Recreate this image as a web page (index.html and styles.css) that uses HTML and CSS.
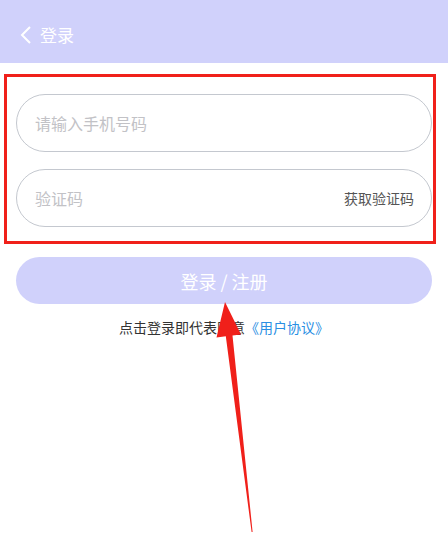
FILE: index.html
```html
<!DOCTYPE html>
<html lang="zh">
<head>
<meta charset="utf-8">
<title>登录</title>
<link rel="stylesheet" href="styles.css">
</head>
<body>
<header class="topbar">
  <svg class="back" width="14" height="20" viewBox="0 0 14 20"><path d="M11 2 L3 10 L11 18" fill="none" stroke="#fff" stroke-width="2"/></svg>
  <span class="title">登录</span>
</header>
<main class="content">
  <div class="field"><span class="ph">请输入手机号码</span></div>
  <div class="field"><span class="ph">验证码</span><span class="code">获取验证码</span></div>
  <div class="btn">登录 / 注册</div>
  <p class="agree">点击登录即代表同意<span class="link">《用户协议》</span></p>
</main>
<div class="mark"></div>
<svg class="arrow" width="448" height="540" viewBox="0 0 448 540">
  <polygon fill="#f0201a" points="225,302 241,334.6 232.5,335.5 252.6,532 251.6,532 225.8,336.3 216.5,337.4"/>
</svg>
</body>
</html>
```
FILE: styles.css
```css
html, body {
  margin: 0;
  padding: 0;
  background: #fff;
  font-family: "Noto Sans CJK SC", "Noto Sans", sans-serif;
}
body {
  width: 448px;
  height: 540px;
  position: relative;
  overflow: hidden;
}
.topbar {
  height: 63px;
  background: #d0d1fb;
  display: flex;
  align-items: center;
  padding-left: 19px;
  box-sizing: border-box;
  padding-top: 6px;
}
.back {
  display: block;
}
.title {
  color: #fff;
  font-size: 17px;
  margin-left: 7px;
  line-height: 20px;
}
.content {
  padding: 31px 16px 0;
  display: flex;
  flex-direction: column;
}
.field {
  height: 58px;
  border: 1px solid #c4c8cf;
  border-radius: 29px;
  box-sizing: border-box;
  display: flex;
  align-items: center;
  justify-content: space-between;
  padding: 0 17px 0 18px;
  margin-bottom: 17px;
}
.ph {
  color: #c2c2c6;
  font-size: 16px;
}
.code {
  color: #555;
  font-size: 14px;
}
.btn {
  margin-top: 13px;
  height: 47px;
  border-radius: 24px;
  background: #d0d1fb;
  color: #fff;
  font-size: 18px;
  display: flex;
  align-items: center;
  justify-content: center;
}
.agree {
  margin: 13px 0 0;
  text-align: center;
  font-size: 14px;
  color: #333;
  line-height: 20px;
}
.link {
  color: #2a8fe3;
}
.mark {
  position: absolute;
  left: 4px;
  top: 74px;
  width: 432px;
  height: 170px;
  border: 3px solid #f0201a;
  box-sizing: border-box;
}
.arrow {
  position: absolute;
  left: 0;
  top: 0;
}
```
